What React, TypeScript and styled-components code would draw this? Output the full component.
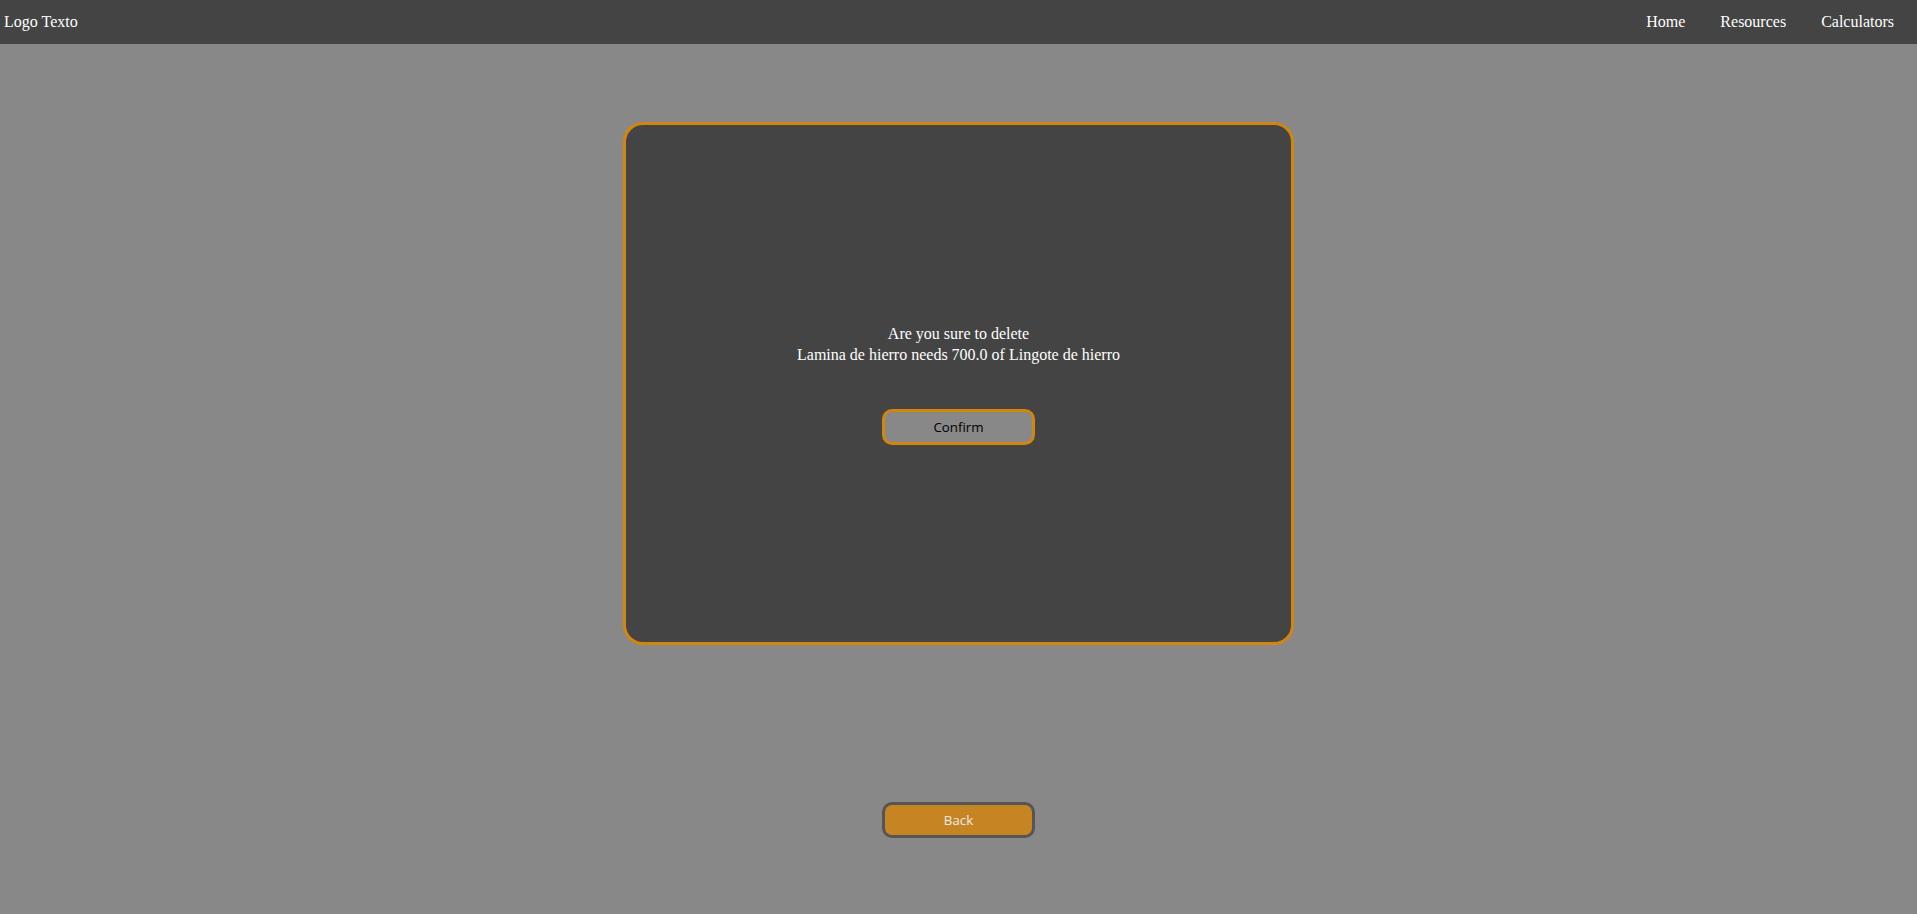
import React from "react";
import styled, { createGlobalStyle } from "styled-components";

const GlobalStyle = createGlobalStyle`
  html, body {
    margin: 0;
    padding: 0;
    background-color: #888888;
    font-family: "Liberation Serif", "Times New Roman", serif;
    color: #ffffff;
  }
`;

const Page = styled.div`
  min-height: 914px;
  display: flex;
  flex-direction: column;
  align-items: center;
`;

const Header = styled.header`
  width: 100%;
  height: 44px;
  box-sizing: border-box;
  background-color: #444444;
  display: flex;
  justify-content: space-between;
  align-items: center;
  padding: 0 23px 0 4px;
  font-size: 16px;
`;

const Logo = styled.span`
  color: #ffffff;
`;

const Nav = styled.nav`
  display: flex;
  gap: 35px;
`;

const NavLink = styled.a`
  color: #ffffff;
  text-decoration: none;
  cursor: pointer;
`;

const Card = styled.section`
  margin-top: 78px;
  width: 671px;
  height: 523px;
  box-sizing: border-box;
  background-color: #444444;
  border: 3px solid #d4850b;
  border-radius: 20px;
  display: flex;
  flex-direction: column;
  justify-content: center;
  align-items: center;
  gap: 44px;
`;

const Message = styled.p`
  margin: 0;
  text-align: center;
  font-size: 16px;
  line-height: 21px;
`;

const Button = styled.button<{ $variant?: "confirm" | "back" }>`
  width: 153px;
  height: 36px;
  box-sizing: border-box;
  border-radius: 10px;
  border: 3px solid
    ${(p) => (p.$variant === "back" ? "#555555" : "#d4850b")};
  background-color: ${(p) => (p.$variant === "back" ? "#c58522" : "#888888")};
  color: ${(p) => (p.$variant === "back" ? "#ebebeb" : "#000000")};
  font-family: "Open Sans", "Noto Sans", sans-serif;
  font-size: 13.33px;
  cursor: pointer;
`;

const Footer = styled.div`
  margin-top: 157px;
`;

const App: React.FC = () => {
  return (
    <>
      <GlobalStyle />
      <Page>
        <Header>
          <Logo>Logo Texto</Logo>
          <Nav>
            <NavLink>Home</NavLink>
            <NavLink>Resources</NavLink>
            <NavLink>Calculators</NavLink>
          </Nav>
        </Header>
        <Card>
          <Message>
            Are you sure to delete
            <br />
            Lamina de hierro needs 700.0 of Lingote de hierro
          </Message>
          <Button $variant="confirm">Confirm</Button>
        </Card>
        <Footer>
          <Button $variant="back">Back</Button>
        </Footer>
      </Page>
    </>
  );
};

export default App;
